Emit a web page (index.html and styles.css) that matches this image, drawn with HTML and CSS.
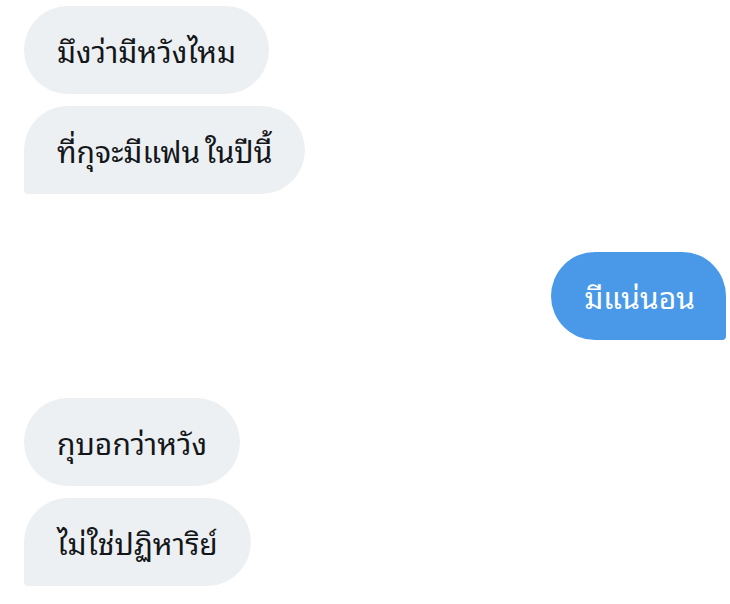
FILE: index.html
```html
<!DOCTYPE html>
<html lang="th">
<head>
<meta charset="utf-8">
<link rel="stylesheet" href="styles.css">
</head>
<body>
<div class="chat">
  <div class="group in">
    <div class="bubble">มึงว่ามีหวังไหม</div>
    <div class="bubble last">ที่กุจะมีแฟน ในปีนี้</div>
  </div>
  <div class="group out">
    <div class="bubble last">มีแน่นอน</div>
  </div>
  <div class="group in">
    <div class="bubble">กุบอกว่าหวัง</div>
    <div class="bubble last">ไม่ใช่ปฏิหาริย์</div>
  </div>
</div>
</body>
</html>
```
FILE: styles.css
```css
html, body {
  margin: 0;
  padding: 0;
  background: #ffffff;
}
.chat {
  display: flex;
  flex-direction: column;
  gap: 58px;
  padding: 6px 4px 0 24px;
  font-family: "Noto Sans Thai Looped", "Noto Sans", "DejaVu Sans", sans-serif;
}
.group {
  display: flex;
  flex-direction: column;
  gap: 12px;
}
.group.in { align-items: flex-start; }
.group.out { align-items: flex-end; }
.bubble {
  height: 88px;
  box-sizing: border-box;
  display: flex;
  align-items: center;
  padding: 0 33px 2px;
  border-radius: 44px;
  font-size: 30px;
  font-weight: 400;
  word-spacing: -3px;
  color: #14171a;
  background: #edf0f2;
  white-space: nowrap;
}
.in .bubble.last { border-bottom-left-radius: 4px; }
.out .bubble {
  background: #4a99e9;
  color: #ffffff;
  padding: 0 31px 2px 33px;
}
.out .bubble.last { border-bottom-right-radius: 4px; }
```
